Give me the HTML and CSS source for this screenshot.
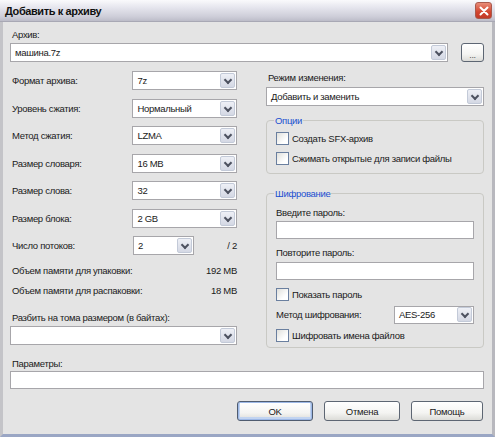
FILE: index.html
```html
<!DOCTYPE html>
<html lang="ru">
<head>
<meta charset="utf-8">
<title>Добавить к архиву</title>
<link rel="stylesheet" href="styles.css">
</head>
<body>
<div class="window">
  <div class="titlebar">
    <span class="title">Добавить к архиву</span>
    <span class="close"><svg width="10" height="10" viewBox="0 0 10 10"><path d="M1.5 1.5 L8.5 8.5 M8.5 1.5 L1.5 8.5" stroke="#fff" stroke-width="2" stroke-linecap="round"/></svg></span>
  </div>
  <div class="body">
    <div class="label archive-label">Архив:</div>
    <div class="archive-row">
      <div class="combo wide"><span class="val">машина.7z</span><span class="arrow"></span></div>
      <button class="btn browse">...</button>
    </div>
    <div class="cols">
      <div class="left">
        <div class="row"><span class="label">Формат архива:</span><div class="combo sel"><span class="val">7z</span><span class="arrow"></span></div></div>
        <div class="row"><span class="label">Уровень сжатия:</span><div class="combo sel"><span class="val">Нормальный</span><span class="arrow"></span></div></div>
        <div class="row"><span class="label">Метод сжатия:</span><div class="combo sel"><span class="val">LZMA</span><span class="arrow"></span></div></div>
        <div class="row"><span class="label">Размер словаря:</span><div class="combo sel"><span class="val">16 MB</span><span class="arrow"></span></div></div>
        <div class="row"><span class="label">Размер слова:</span><div class="combo sel"><span class="val">32</span><span class="arrow"></span></div></div>
        <div class="row"><span class="label">Размер блока:</span><div class="combo sel"><span class="val">2 GB</span><span class="arrow"></span></div></div>
        <div class="row"><span class="label">Число потоков:</span><div class="combo short"><span class="val">2</span><span class="arrow"></span></div><span class="of">/ 2</span></div>
        <div class="mem first"><span class="label">Объем памяти для упаковки:</span><span>192 MB</span></div>
        <div class="mem"><span class="label">Объем памяти для распаковки:</span><span>18 MB</span></div>
        <div class="label split-label">Разбить на тома размером (в байтах):</div>
        <div class="combo full"><span class="val"></span><span class="arrow"></span></div>
      </div>
      <div class="right">
        <div class="label mode-label">Режим изменения:</div>
        <div class="combo full"><span class="val">Добавить и заменить</span><span class="arrow"></span></div>
        <fieldset class="group options">
          <legend>Опции</legend>
          <label class="check"><span class="box"></span>Создать SFX-архив</label>
          <label class="check"><span class="box"></span>Сжимать открытые для записи файлы</label>
        </fieldset>
        <fieldset class="group crypt">
          <legend>Шифрование</legend>
          <div class="label pw-label">Введите пароль:</div>
          <div class="input"></div>
          <div class="label pw-label">Повторите пароль:</div>
          <div class="input"></div>
          <label class="check show"><span class="box"></span>Показать пароль</label>
          <div class="crow"><span class="label">Метод шифрования:</span><div class="combo enc"><span class="val">AES-256</span><span class="arrow"></span></div></div>
          <label class="check names"><span class="box"></span>Шифровать имена файлов</label>
        </fieldset>
      </div>
    </div>
    <div class="label params-label">Параметры:</div>
    <div class="input params"></div>
    <div class="buttons">
      <button class="btn def">OK</button>
      <button class="btn">Отмена</button>
      <button class="btn help">Помощь</button>
    </div>
  </div>
</div>
</body>
</html>
```

FILE: styles.css
```css
* { box-sizing: border-box; }
html, body { margin: 0; padding: 0; background: #e4e4e4; }
body {
  font-family: "Liberation Sans", Arial, sans-serif;
  font-size: 9.5px;
  letter-spacing: -0.3px;
  color: #1a1a1a;
}
.window {
  width: 495px;
  height: 437px;
  background: #e4e4e4;
  border-left: 3px solid #c4c4c8;
  border-right: 3px solid #b8b8be;
  border-bottom: 3px solid #9aa6c4;
  display: flex;
  flex-direction: column;
}
.titlebar {
  height: 22px;
  margin: 0 -3px;
  background: linear-gradient(#fafafc 0%, #e6e6ee 35%, #cdcdd8 80%, #bcbcc8 100%);
  border-bottom: 1px solid #a8a8b4;
  display: flex;
  align-items: center;
  justify-content: space-between;
  padding: 0 3px 0 5px;
}
.title {
  font-weight: bold;
  font-size: 11px;
  letter-spacing: -0.4px;
  color: #101010;
}
.close {
  width: 17px;
  height: 17px;
  border-radius: 3px;
  border: 1px solid #a9594c;
  background: linear-gradient(#e88b77, #d2452f 60%, #c23a28);
  display: flex;
  align-items: center;
  justify-content: center;
}
.body {
  padding: 4px 8px 0 7px;
  flex: 1;
  display: flex;
  flex-direction: column;
}
.label { white-space: nowrap; }
.archive-label { margin: 3px 0 2px 2px; line-height: 12px; }
.archive-row { display: flex; align-items: center; }
.combo {
  height: 19px;
  background: #fff;
  border: 1px solid #a7a6aa;
  display: flex;
  align-items: center;
  justify-content: space-between;
  padding: 1px;
}
.combo .val { padding-left: 3px; }
.combo .arrow {
  width: 15px;
  height: 15px;
  border: 1px solid #c3cad8;
  border-radius: 2px;
  background: linear-gradient(#eef0f6, #d4d8e4);
  position: relative;
}
.combo .arrow::after {
  content: "";
  position: absolute;
  left: 4px;
  top: 3px;
  width: 4px;
  height: 4px;
  border-right: 2px solid #4d5260;
  border-bottom: 2px solid #4d5260;
  transform: rotate(45deg);
}
.wide { width: 438px; }
.btn {
  font-family: inherit;
  font-size: 9.5px;
  letter-spacing: -0.3px;
  color: #1a1a1a;
  height: 20px;
  border: 1px solid #5d6673;
  border-radius: 3px;
  background: linear-gradient(#ffffff, #f4f4f2 60%, #dcdcd8);
  padding: 0;
}
.browse {
  width: 23px;
  height: 19px;
  margin-left: 13px;
  line-height: 8px;
  font-size: 9px;
  color: #555;
  padding-top: 4px;
}
.cols {
  display: flex;
  gap: 29px;
  margin-top: 8px;
}
.left { width: 227px; padding-top: 1px; }
.row {
  height: 19px;
  display: flex;
  align-items: center;
  margin-bottom: 8.5px;
  padding-left: 2px;
}
.row .label { width: 121px; }
.combo.sel { width: 105px; }
.combo.short { width: 61px; }
.of { margin-left: auto; }
.mem {
  display: flex;
  justify-content: space-between;
  padding-left: 2px;
  line-height: 14px;
  margin-bottom: 6px;
}
.mem.first { margin-top: 0; }
.split-label { margin: 13px 0 2.5px 2px; line-height: 13px; }
.combo.full { width: 100%; }
.right { width: 218px; }
.mode-label { margin: 1px 0 3px 2px; line-height: 13px; }
.group {
  margin: 0;
  border: 1px solid #c9c9c4;
  border-radius: 4px;
  padding: 0 9px;
  min-width: 0;
}
.group legend {
  color: #1a4fd0;
  padding: 0 1px;
  margin-left: -2px;
  line-height: 13px;
}
.options { height: 60px; margin-top: 7.5px; padding-top: 5px; }
.check {
  display: flex;
  align-items: center;
  height: 13px;
  margin-bottom: 7px;
}
.box {
  width: 13px;
  height: 13px;
  border: 1px solid #6a7f9f;
  background: linear-gradient(135deg, #e0e0dc, #ffffff 70%);
  margin-right: 3px;
  flex: none;
}
.crypt { height: 161.5px; margin-top: 13px; padding-top: 6px; }
.pw-label { line-height: 13px; margin-bottom: 2.5px; }
.input {
  height: 18px;
  background: #fff;
  border: 1px solid #a7a6aa;
}
.crypt .input { width: 198px; margin-bottom: 7px; }
.crypt .input + .pw-label + .input { margin-bottom: 8.5px; }
.check.show { margin-bottom: 4.5px; }
.crow { display: flex; align-items: center; justify-content: space-between; width: 198px; margin-bottom: 5px; }
.combo.enc { width: 80px; height: 18px; }
.params-label { margin: 8.5px 0 1.5px 2px; line-height: 13px; }
.input.params { width: 474px; }
.buttons {
  display: flex;
  justify-content: flex-end;
  gap: 11px;
  margin-top: 12px;
  padding-right: 1px;
}
.buttons .btn { width: 76px; }
.buttons .help { width: 72px; }
.btn.def {
  border-color: #4f5c70;
  box-shadow: inset 0 0 0 1px #9db8e6, inset 0 -1px 0 2px #c2d4f0;
}
```
